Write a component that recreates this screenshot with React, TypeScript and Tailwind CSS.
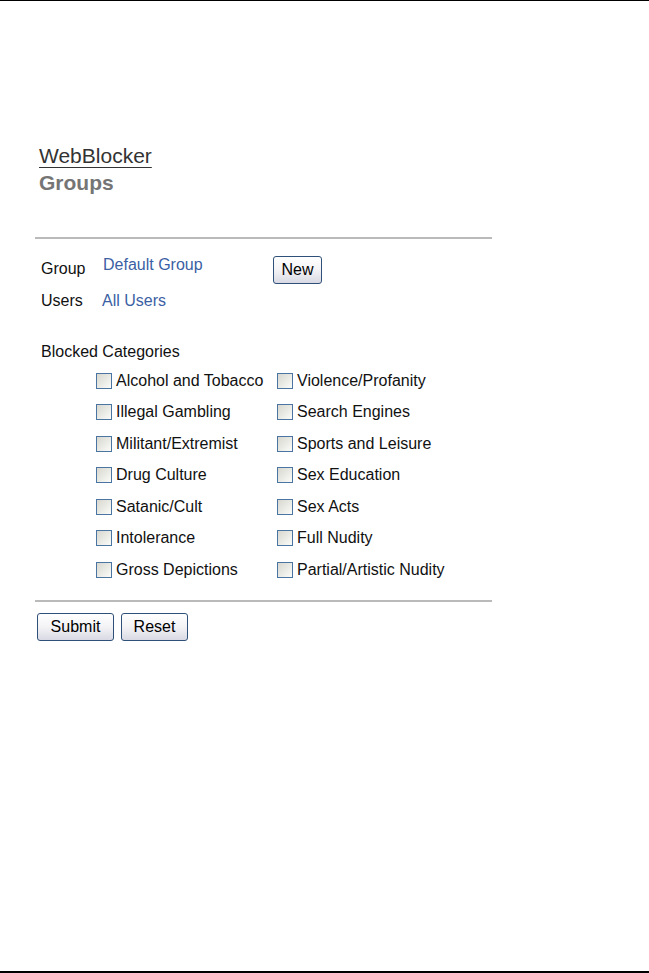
import React from 'react';

const leftColumn = [
  'Alcohol and Tobacco',
  'Illegal Gambling',
  'Militant/Extremist',
  'Drug Culture',
  'Satanic/Cult',
  'Intolerance',
  'Gross Depictions',
];

const rightColumn = [
  'Violence/Profanity',
  'Search Engines',
  'Sports and Leisure',
  'Sex Education',
  'Sex Acts',
  'Full Nudity',
  'Partial/Artistic Nudity',
];

const Checkbox: React.FC<{ label: string }> = ({ label }) => (
  <label className="flex items-center h-[31.5px] cursor-pointer">
    <span className="w-4 h-4 shrink-0 border border-[#4a75a3] bg-gradient-to-br from-[#d8d8d0] to-[#fbfbf9]" />
    <span className="ml-1 text-[16px] leading-[18px] text-[#111]">{label}</span>
  </label>
);

const XpButton: React.FC<{ label: string; width: string }> = ({ label, width }) => (
  <button
    type="button"
    className={`${width} h-7 rounded-[3px] border border-[#2f5079] bg-gradient-to-b from-white via-[#f3f3f6] to-[#d9d9e4] text-[16px] leading-[18px] text-black`}
  >
    {label}
  </button>
);

const App: React.FC = () => {
  return (
    <div className="w-[649px] h-[973px] bg-white border-t border-b-2 border-black font-['Liberation_Sans',Arial,sans-serif]">
      <div className="pl-[35px] pt-[143px]">
        {/* page title */}
        <div className="ml-1">
          <div className="text-[21px] leading-6 text-[#333] underline underline-offset-[4px] decoration-1">WebBlocker</div>
          <div className="mt-[3px] text-[21px] leading-6 font-bold text-[#757575]">Groups</div>
        </div>

        <div className="mt-[42px] w-[457px] h-[2px] bg-[#bababa]" />

        {/* group settings */}
        <div className="pl-[6px]">
          <div className="mt-[17px] flex items-start h-7">
            <span className="w-[62px] mt-[4px] text-[16px] leading-[18px] text-[#111]">Group</span>
            <span className="w-[170px] text-[16px] leading-[18px] text-[#3b5fa4]">Default Group</span>
            <XpButton label="New" width="w-[49px]" />
          </div>
          <div className="mt-2 flex items-start">
            <span className="w-[61px] text-[16px] leading-[18px] text-[#111]">Users</span>
            <span className="text-[16px] leading-[18px] text-[#3b5fa4]">All Users</span>
          </div>
          <div className="mt-[33px] text-[16px] leading-[18px] text-[#111]">Blocked Categories</div>
        </div>

        <div className="mt-[4px] ml-[61px] grid grid-cols-[181px_1fr]">
          <div className="flex flex-col">
            {leftColumn.map((c) => (
              <Checkbox key={c} label={c} />
            ))}
          </div>
          <div className="flex flex-col">
            {rightColumn.map((c) => (
              <Checkbox key={c} label={c} />
            ))}
          </div>
        </div>

        <div className="mt-[14px] w-[457px] h-[2px] bg-[#bababa]" />

        <div className="mt-[11px] ml-[2px] flex gap-[7px]">
          <XpButton label="Submit" width="w-[77px]" />
          <XpButton label="Reset" width="w-[67px]" />
        </div>
      </div>
    </div>
  );
};

export default App;
